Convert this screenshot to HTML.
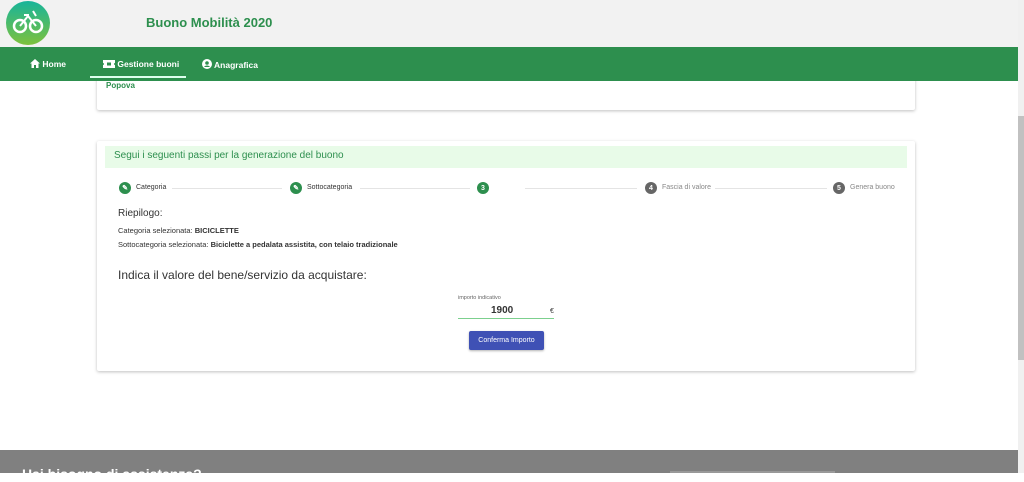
<!DOCTYPE html>
<html><head><meta charset="utf-8"><style>
*{margin:0;padding:0;box-sizing:border-box}
body{width:1024px;height:473px;overflow:hidden;background:#fff;font-family:"Liberation Sans",sans-serif;position:relative}
.hdr{position:absolute;left:0;top:0;width:1018px;height:47px;background:#f2f2f2}
.title{position:absolute;left:146px;top:15px;font-size:13px;font-weight:bold;color:#2d8f4e}
.logo{position:absolute;left:6px;top:1px;width:44px;height:44px;border-radius:50%;background:linear-gradient(#18b49a,#7dc13d)}
.nav{position:absolute;left:0;top:47px;width:1018px;height:34px;background:#2d8f4e;color:#fff;font-size:8.5px;font-weight:bold;z-index:2}
.nav span{position:absolute;top:12px}
.ul{position:absolute;left:90px;top:29px;width:96px;height:2px;background:#dfe}
.card{position:absolute;background:#fff;box-shadow:0 1px 3px rgba(0,0,0,.25);border-radius:2px}
.sb{position:absolute;left:1018px;top:0;width:6px;height:473px;background:#f0f0f0}
.sb div{position:absolute;left:0;top:116px;width:6px;height:244px;background:#c1c1c1}
.foot{position:absolute;left:0;top:450px;width:1018px;height:23px;background:#808080}
.step{position:absolute;top:184px;font-size:7px;color:#333}
.c{position:absolute;width:12px;height:12px;border-radius:50%;color:#fff;font-size:7px;font-weight:bold;display:flex;align-items:center;justify-content:center;top:182px}
.line{position:absolute;top:188px;height:1px;background:#e4e4e4}
.t{position:absolute;font-size:7.5px;color:#333}
</style></head><body>
<div class="hdr"><div class="logo"><svg width="44" height="44" viewBox="0 0 44 44"><circle cx="14" cy="25" r="6" fill="none" stroke="#fff" stroke-width="2.5"/><circle cx="30" cy="25" r="6" fill="none" stroke="#fff" stroke-width="2.5"/><path d="M14 25 L22 15 L30 25 M18 14h5 M27 10l3 5" stroke="#fff" stroke-width="2" fill="none"/></svg></div><div class="title">Buono Mobilità 2020</div></div>
<div class="card" style="left:97px;top:70px;width:818px;height:40px"></div>
<div style="position:absolute;left:106px;top:81px;font-size:8px;font-weight:bold;color:#2d8f4e">Popova</div>
<div class="nav"><span style="left:30px"><svg width="10" height="9" viewBox="0 0 10 9" style="vertical-align:-1px"><path d="M5 0L0 4.5h1.5V9h2.5V6h2v3h2.5V4.5H10z" fill="#fff"/></svg> Home</span><span style="left:103px"><svg width="12" height="8" viewBox="0 0 12 8" style="vertical-align:-1px"><path d="M0 0h12v3a1 1 0 0 0 0 2v3H0V5a1 1 0 0 0 0-2z" fill="#fff"/><rect x="4" y="2.5" width="4" height="3" fill="#2d8f4e"/></svg> Gestione buoni</span><span style="left:202px"><svg width="10" height="10" viewBox="0 0 10 10" style="vertical-align:-1px"><circle cx="5" cy="5" r="5" fill="#fff"/><circle cx="5" cy="4" r="1.8" fill="#2d8f4e"/><path d="M2 8a3.5 3 0 0 1 6 0" fill="#2d8f4e"/></svg> Anagrafica</span><div class="ul"></div></div>
<div class="card" style="left:97px;top:141px;width:818px;height:230px"></div>
<div style="position:absolute;left:105px;top:146px;width:802px;height:22px;background:#e8fbe8;color:#2d8f4e;font-size:10px;padding:4px 0 0 9px">Segui i seguenti passi per la generazione del buono</div>
<div class="c" style="left:119px;background:#2d8f4e">✎</div><div class="step" style="left:136px">Categoria</div>
<div class="line" style="left:172px;width:110px"></div>
<div class="c" style="left:290px;background:#2d8f4e">✎</div><div class="step" style="left:307px">Sottocategoria</div>
<div class="line" style="left:360px;width:110px"></div>
<div class="c" style="left:477px;background:#2d8f4e">3</div>
<div class="line" style="left:525px;width:112px"></div>
<div class="c" style="left:645px;background:#666">4</div><div class="step" style="left:662px;color:#888">Fascia di valore</div>
<div class="line" style="left:715px;width:112px"></div>
<div class="c" style="left:833px;background:#666">5</div><div class="step" style="left:850px;color:#888">Genera buono</div>
<div class="t" style="left:118px;top:208px;font-size:10px">Riepilogo:</div>
<div class="t" style="left:118px;top:226px">Categoria selezionata: <b>BICICLETTE</b></div>
<div class="t" style="left:118px;top:240px">Sottocategoria selezionata: <b>Biciclette a pedalata assistita, con telaio tradizionale</b></div>
<div class="t" style="left:118px;top:268px;font-size:12px">Indica il valore del bene/servizio da acquistare:</div>
<div class="t" style="left:458px;top:295px;font-size:5.5px;color:#666">importo indicativo</div>
<div class="t" style="left:491px;top:305px;font-size:10px;font-weight:bold">1900</div>
<div class="t" style="left:550px;top:308px;font-size:7px">€</div>
<div style="position:absolute;left:458px;top:318px;width:96px;height:1px;background:#7cd08e"></div>
<div style="position:absolute;left:469px;top:331px;width:75px;height:19px;background:#3f51b5;border-radius:2px;color:#fff;font-size:7px;text-align:center;line-height:19px;box-shadow:0 1px 2px rgba(0,0,0,.3)">Conferma Importo</div>
<div class="foot"><div style="position:absolute;left:22px;top:16px;color:#fff;font-size:14px;font-weight:bold">Hai bisogno di assistenza?</div><div style="position:absolute;left:670px;top:21px;width:165px;height:2px;background:#999"></div></div>
<div class="sb"><div></div></div>
</body></html>
